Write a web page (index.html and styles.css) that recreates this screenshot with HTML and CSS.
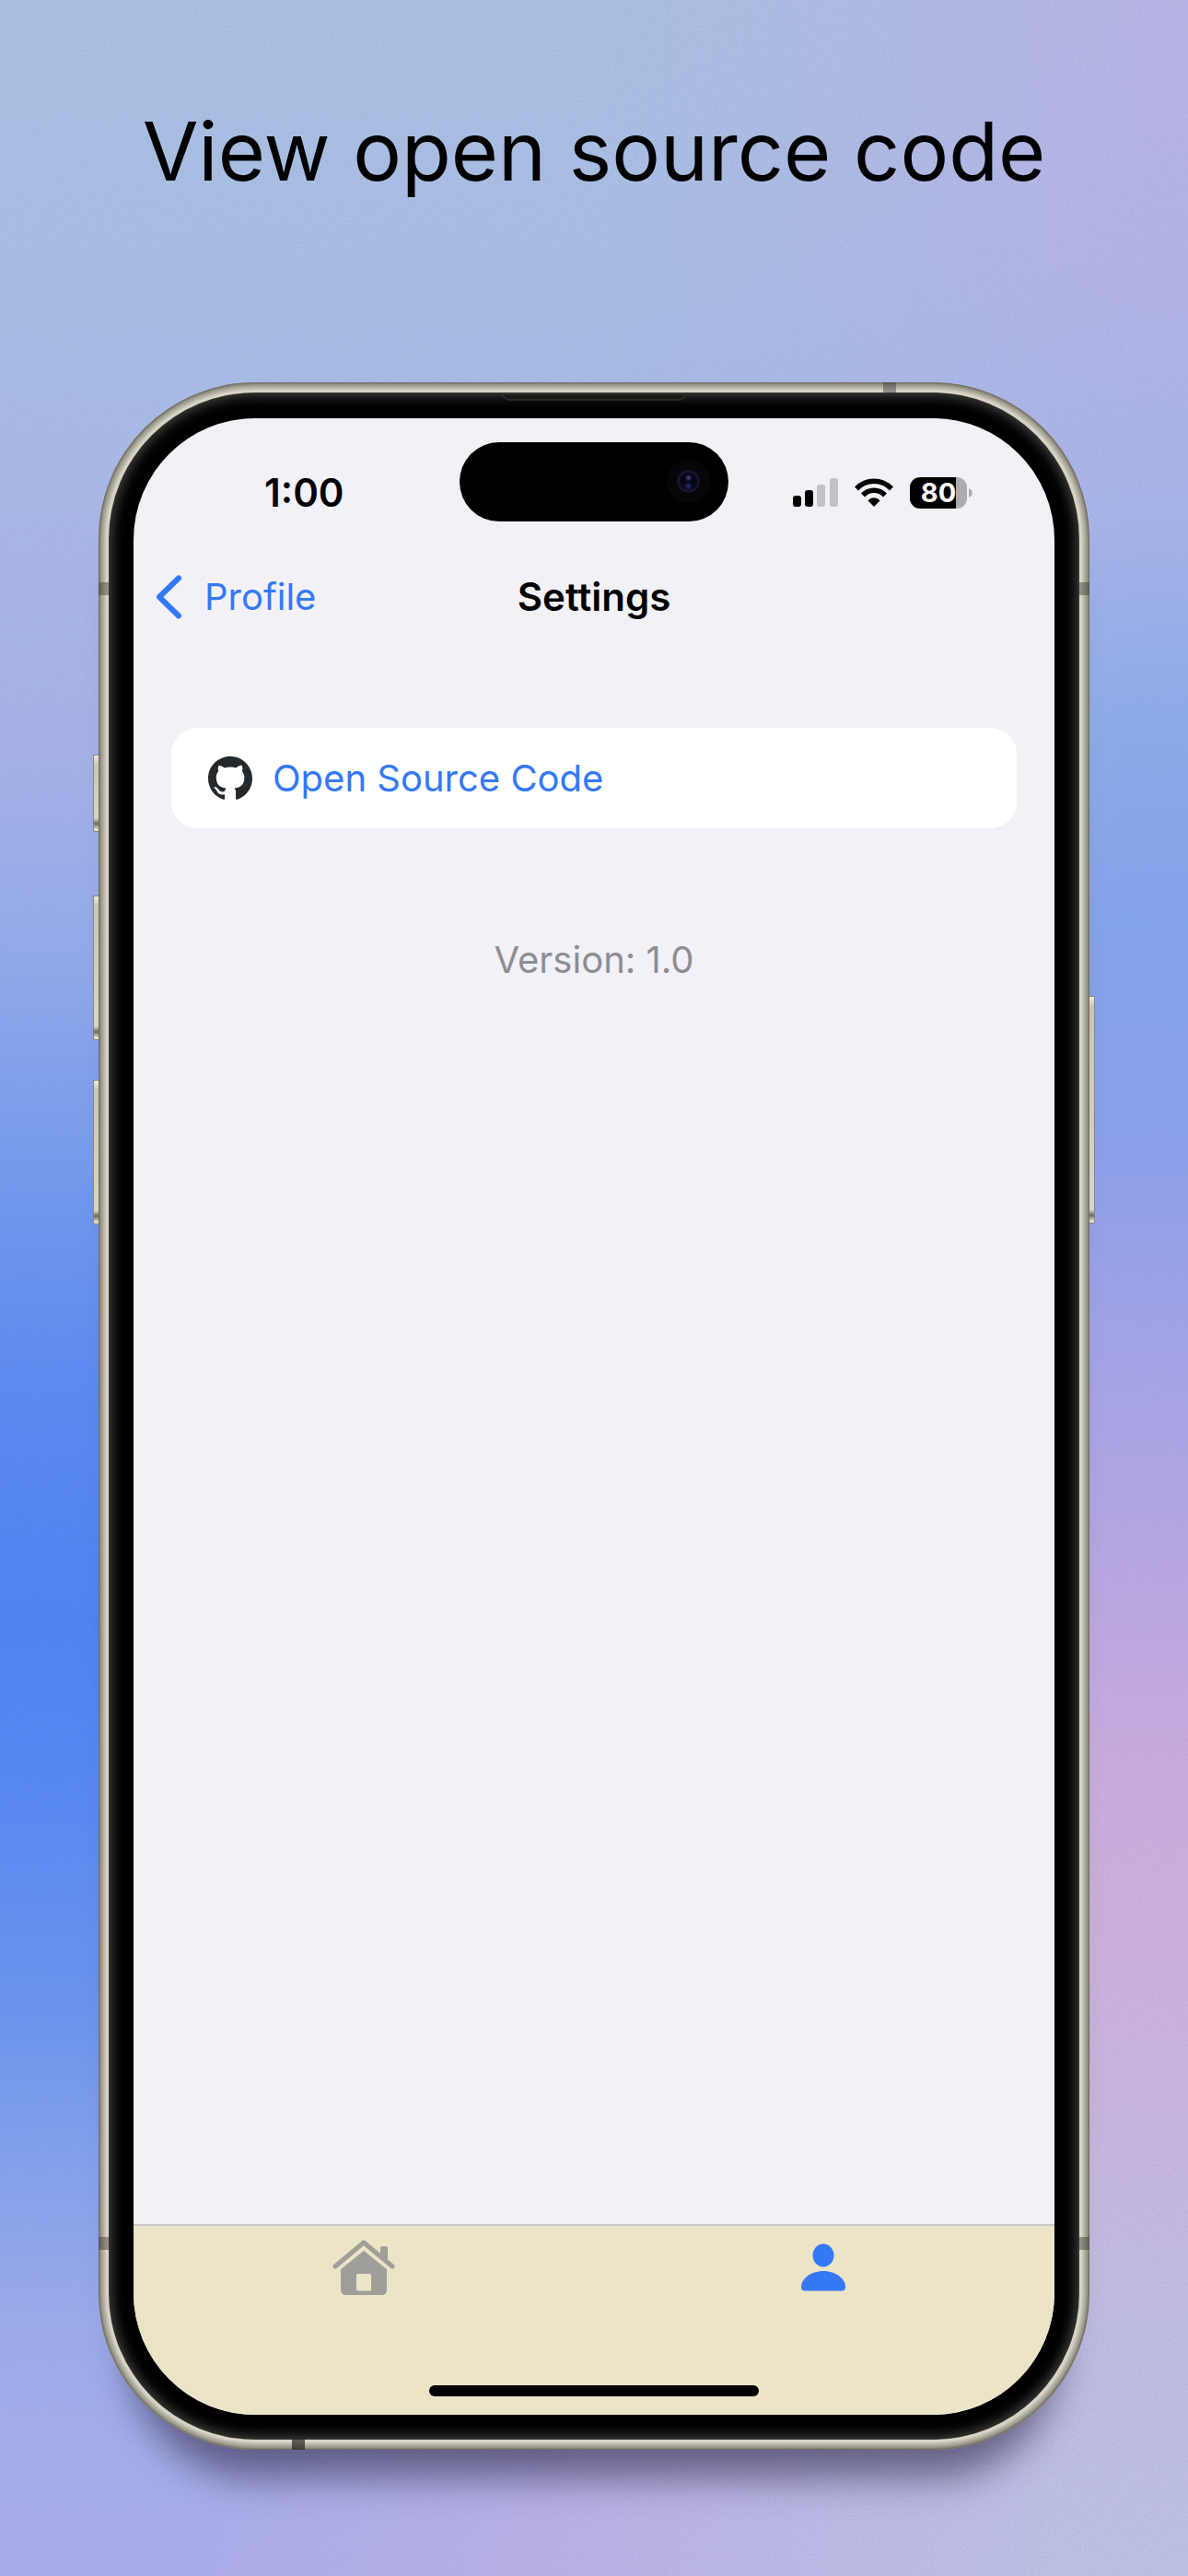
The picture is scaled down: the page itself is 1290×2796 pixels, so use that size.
FILE: index.html
```html
<!DOCTYPE html>
<html lang="en">
<head>
<meta charset="utf-8">
<meta name="viewport" content="width=device-width, initial-scale=1">
<title>View open source code</title>
<link rel="stylesheet" href="styles.css">
</head>
<body>
<main class="poster">
  <svg class="grain" aria-hidden="true"><filter id="noise" x="0" y="0" width="100%" height="100%"><feTurbulence type="fractalNoise" baseFrequency=".5" numOctaves="2"/><feColorMatrix values="0 0 0 0 .25  0 0 0 0 .35  0 0 0 0 .6  1.6 0 0 0 -.6"/></filter><rect width="100%" height="100%" filter="url(#noise)"/></svg>
  <h1 class="headline">View open source code</h1>
  <div class="phone">
    <span class="key key-action"></span>
    <span class="key key-up"></span>
    <span class="key key-down"></span>
    <span class="key key-power"></span>
    <span class="band band-top"></span>
    <span class="band band-bottom"></span>
    <span class="band band-side band-left band-high"></span>
    <span class="band band-side band-right band-high"></span>
    <span class="band band-side band-left band-low"></span>
    <span class="band band-side band-right band-low"></span>
    <div class="bezel">
      <svg class="speaker" viewBox="0 0 200 7" aria-hidden="true"><path d="M0 0H200L196 5Q195 6 193 6H7Q5 6 4 5Z" fill="#181818" stroke="#3a3a38"/></svg>
      <div class="screen">
        <div class="island"><span class="camera"></span></div>
        <header class="status">
          <time class="clock">1:00</time>
          <div class="indicators">
            <svg class="signal" viewBox="0 0 50 32" aria-label="Signal"><g fill="#000"><rect x="1" y="19" width="9" height="12" rx="3"/><rect x="14" y="13" width="9" height="18" rx="3"/></g><g fill="#c2c1c6"><rect x="27" y="7" width="9" height="24" rx="3"/><rect x="41" y="0" width="9" height="31" rx="3"/></g></svg>
            <svg class="wifi" viewBox="0 0 42 32" aria-label="Wi-Fi"><g fill="none" stroke="#000" stroke-width="5.6"><path d="M2 11.5C12.500 .5 29.500 .5 40 11.500"/><path d="M9 18.500C15.500 11.500 26.500 11.500 33 18.500"/></g><path d="M14.500 24.500C18 20.300 24 20.300 27.500 24.500L21 31Z"/></svg>
            <div class="battery"><span class="level">80</span><svg class="cap" viewBox="0 0 4 10" aria-hidden="true"><path d="M0 0C5 2 5 8 0 10Z" fill="#acabb0"/></svg></div>
          </div>
        </header>
        <nav class="navbar">
          <a class="back" href="#profile"><svg class="chevron" viewBox="0 0 30 48" aria-hidden="true"><path d="M25 3.500L4 24L25 44.500" fill="none" stroke="currentColor" stroke-width="6" stroke-linecap="round" stroke-linejoin="round"/></svg>Profile</a>
          <h2 class="title">Settings</h2>
        </nav>
        <section class="content">
          <a class="row" href="#source">
            <svg class="github" viewBox="0 0 16 16" aria-hidden="true"><path fill="#24292e" d="M8 0C3.58 0 0 3.58 0 8c0 3.540 2.290 6.530 5.470 7.590.4.070.55-.17.55-.38 0-.19-.010-.82-.010-1.490-2.010.37-2.530-.49-2.690-.94-.09-.23-.48-.94-.82-1.130-.28-.15-.68-.52-.010-.53.63-.010 1.080.58 1.230.82.72 1.210 1.870.87 2.330.66.070-.52.28-.87.51-1.070-1.780-.2-3.640-.89-3.640-3.950 0-.87.31-1.590.82-2.150-.080-.2-.36-1.020.080-2.120 0 0 .67-.21 2.200.82.64-.18 1.320-.27 2-.27s1.360.09 2 .27c1.530-1.040 2.200-.82 2.200-.82.44 1.100.16 1.920.080 2.120.51.56.82 1.270.82 2.150 0 3.070-1.870 3.750-3.650 3.950.29.25.54.73.54 1.480 0 1.070-.010 1.930-.010 2.200 0 .21.15.46.55.38A8.010 8.010 0 0 0 16 8c0-4.420-3.580-8-8-8z"/></svg>
            Open Source Code
          </a>
          <p class="version">Version: 1.0</p>
        </section>
        <nav class="tabs">
          <a class="tab" href="#home" aria-label="Home"><svg class="icon" viewBox="0 0 68 64" aria-hidden="true"><g fill="none" stroke="#a09e99" stroke-width="5" stroke-linecap="round" stroke-linejoin="round"><path d="M3 31L34 5L65 31"/></g><path fill="#a09e99" d="M52 18V11q0-2 2-2h4q2 0 2 2v15zM34 14L59 34V56q0 6-6 6H15q-6 0-6-6V34zM27.500 39q-1.500 0-1.500 1.500V56q0 1.500 1.500 1.500h13q1.500 0 1.500-1.500V40.500q0-1.500-1.500-1.500z" fill-rule="evenodd"/></svg></a>
          <a class="tab" href="#profile" aria-label="Profile"><svg class="icon" viewBox="0 0 68 64" aria-hidden="true"><g fill="#3478f6"><ellipse cx="34" cy="19" rx="11.500" ry="12.500"/><path d="M10 53C10 45 20 36 34 36S58 45 58 53Q58 57.500 54 57.500H14Q10 57.500 10 53Z"/></g></svg></a>
          <span class="homebar"></span>
        </nav>
      </div>
    </div>
  </div>
</main>
</body>
</html>
```
FILE: styles.css
```css
* { box-sizing: border-box; }
body { margin: 0; font-family: Inter, "Liberation Sans", sans-serif; color: #000; }
a { color: #3478f6; text-decoration: none; }
h1, h2, p { margin: 0; font-weight: 400; }
svg { display: block; flex: none; }

.poster {
  position: relative;
  isolation: isolate;
  min-height: 100vh;
  padding: 104px 107px 137px;
  display: flex;
  flex-direction: column;
  gap: 191px;
  background:
    radial-gradient(ellipse 45% 14% at 60% 100%, #bcb1e6 30%, transparent),
    linear-gradient(#abc1e1 0%, #a9bee5 13%, #abb7e6 20%, #a8b2e8 29%, #93aaeb 37%, #759aee 45%, #5888f2 54%, #4c81f4 63%, #5587f4 70%, #6993ef 78%, #83a1ed 84%, #9caaeb 90%, #a7aeec 95%, #abaceb 100%);
}
.poster::before {
  content: "";
  position: absolute;
  inset: 0;
  z-index: -2;
  background: linear-gradient(#b9b5e5 0%, #b6b4e6 10%, #a8b4e9 20%, #8dabea 28%, #83a3ec 36%, #8a9fec 44%, #a1a3e8 51%, #b8a6e3 60%, #cfabde 69%, #d0b0dd 76%, #c8b7e0 84%, #c1bee3 92%, #c0c0e4 100%);
  -webkit-mask-image: linear-gradient(92deg, transparent 48%, #000 90%);
  mask-image: linear-gradient(92deg, transparent 48%, #000 90%);
}
.grain { position: absolute; inset: 0; z-index: -1; width: 100%; height: 100%; opacity: .35; }
.headline { font-size: 88px; line-height: 120px; text-align: center; white-space: nowrap; }

.phone {
  position: relative;
  flex: 1;
  display: flex;
  padding: 12px;
  border-radius: 170px;
  background: #d3cfc2;
  box-shadow: inset 0 0 2px 1px #6b675d, inset 0 0 7px 4px #7c786c, 0 64px 40px -34px rgba(45, 40, 70, .6);
}
.bezel {
  position: relative;
  flex: 1;
  display: flex;
  padding: 27px 26px 26px;
  border-radius: 158px;
  background: #000;
  box-shadow: 0 0 0 1px #3a3933, 0 0 2px 4px #d9d5c8, inset 0 0 14px 2px #484848;
}
.speaker { position: absolute; top: 1px; left: 50%; width: 200px; height: 7px; transform: translateX(-50%); }
.screen {
  position: relative;
  flex: 1;
  display: flex;
  flex-direction: column;
  overflow: hidden;
  border-radius: 132px;
  background: #f2f1f7;
}

.key { position: absolute; width: 6px; left: -6px; border: 1px solid #8b877b; border-right: 0; border-radius: 2px 0 0 2px; background: linear-gradient(#f0ecdf, #c9c5b8 10px, #d8d4c7 calc(100% - 14px), #6e695e calc(100% - 8px), #e0dccf calc(100% - 2px)); }
.key-action { top: 404px; height: 84px; }
.key-up { top: 557px; height: 157px; }
.key-down { top: 757px; height: 157px; }
.key-power { top: 666px; height: 247px; left: auto; right: -6px; border: 1px solid #8b877b; border-left: 0; border-radius: 0 2px 2px 0; }
.band { position: absolute; z-index: 1; width: 14px; height: 12px; background: rgba(60, 56, 50, .45); }
.band-top { top: 0; right: 210px; }
.band-bottom { bottom: 0; left: 210px; background: rgba(40, 36, 32, .7); }
.band-side { width: 12px; height: 14px; }
.band-left { left: 0; }
.band-right { right: 0; }
.band-high { top: 217px; }
.band-low { bottom: 217px; }

.island { position: absolute; top: 26px; left: 50%; width: 292px; height: 86px; border-radius: 43px; background: #000; transform: translateX(-50%); }
.camera { position: absolute; top: 30px; right: 31px; width: 25px; height: 25px; border-radius: 50%; border: 3px solid #15152e; background: radial-gradient(circle at 50% 30%, #4a4a90 0, transparent 4px), radial-gradient(circle at 50% 78%, #2d2a70 0, transparent 5px), #060618; box-shadow: 0 0 0 11px #070508; }

.status { display: flex; justify-content: space-between; align-items: center; height: 108px; padding: 54px 89px 0 142px; }
.clock { font-size: 42px; line-height: 54px; font-weight: 600; }
.indicators { display: flex; align-items: center; gap: 18px; }
.signal { width: 50px; height: 32px; }
.wifi { width: 42px; height: 32px; }
.battery { display: flex; align-items: center; gap: 2px; }
.level { width: 62px; height: 34px; border-radius: 11px; background: linear-gradient(90deg, #000 50px, #acabb0 50px); color: #fff; font-size: 29px; line-height: 34px; font-weight: 700; text-align: center; }
.cap { width: 4px; height: 10px; }

.navbar { display: grid; grid-template-columns: 1fr auto 1fr; align-items: center; height: 60px; margin-top: 56px; padding: 0 24px; font-size: 40px; line-height: 54px; }
.back { display: flex; align-items: center; gap: 23px; }
.chevron { width: 30px; height: 48px; }
.title { font-size: 42px; font-weight: 600; }

.content { flex: 1; padding: 112px 41px 0; font-size: 40px; line-height: 54px; }
.row { display: flex; align-items: center; gap: 22px; height: 109px; padding: 0 40px; border-radius: 28px; background: #fff; }
.github { width: 48px; height: 48px; }
.version { margin-top: 116px; text-align: center; color: #8e8d92; }

.tabs { position: relative; display: grid; grid-template-columns: 1fr 1fr; justify-items: center; align-items: start; height: 207px; padding: 13px 2px 0 0; border-top: 2px solid #cbc9cc; background: #ece4c6; }
.icon { width: 68px; height: 64px; }
.homebar { position: absolute; left: 50%; bottom: 20px; width: 358px; height: 12px; border-radius: 6px; background: #000; transform: translateX(-50%); }
```
